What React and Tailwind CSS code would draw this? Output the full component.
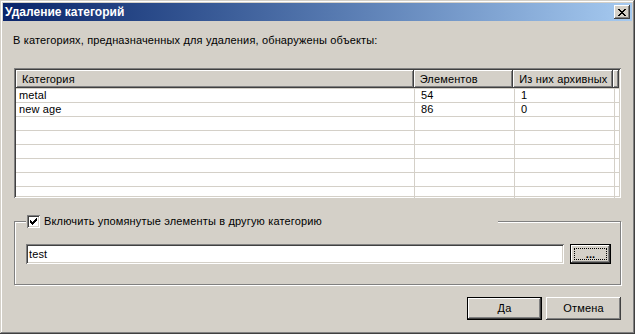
import React from 'react';

const raised = 'shadow-[inset_-1px_-1px_#404040,inset_1px_1px_#ffffff,inset_-2px_-2px_#808080,inset_2px_2px_#d4d0c8]';
const sunken = 'shadow-[inset_1px_1px_#808080,inset_-1px_-1px_#ffffff,inset_2px_2px_#404040,inset_-2px_-2px_#d4d0c8]';

const rows = [
  { name: 'metal', count: '54', archived: '1' },
  { name: 'new age', count: '86', archived: '0' },
  {}, {}, {}, {}, {}, {},
];

const CloseIcon = () => (
  <svg width="8" height="7" viewBox="0 0 8 7" shapeRendering="crispEdges">
    <path fill="#000" d="M0 0h2v1h-2zM6 0h2v1h-2zM1 1h2v1h-2zM5 1h2v1h-2zM2 2h4v1h-4zM3 3h2v1h-2zM2 4h4v1h-4zM1 5h2v1h-2zM5 5h2v1h-2zM0 6h2v1h-2zM6 6h2v1h-2z" />
  </svg>
);

const CheckMark = () => (
  <svg width="7" height="7" viewBox="0 0 7 7" shapeRendering="crispEdges">
    <path fill="#000" d="M6 0h1v3h-1zM5 1h1v3h-1zM4 2h1v3h-1zM3 3h1v3h-1zM2 4h1v3h-1zM1 3h1v3h-1zM0 2h1v3h-1z" />
  </svg>
);

const HeaderCell = ({ children, className }) => (
  <div className={`h-full flex items-center pl-[6px] ${raised} ${className}`}>{children}</div>
);

export default function App() {
  return (
    <div className="w-[635px] h-[334px] bg-[#d4d0c8] p-[3px] flex flex-col text-[11px] tracking-[0.15px] text-black font-['Liberation_Sans',sans-serif] shadow-[inset_-1px_-1px_#404040,inset_1px_1px_#d4d0c8,inset_-2px_-2px_#808080,inset_2px_2px_#ffffff]">
      {/* title bar */}
      <div className="h-[18px] shrink-0 flex items-center justify-between pl-[2px] pr-[2px] bg-gradient-to-r from-[#0a246a] to-[#a6caf0]">
        <span className="text-white font-bold text-[12px] tracking-normal leading-none">Удаление категорий</span>
        <button className={`w-[16px] h-[14px] bg-[#d4d0c8] flex items-center justify-center ${raised}`}>
          <CloseIcon />
        </button>
      </div>

      <div className="flex-1 flex flex-col px-[11px]">
        <div className="mt-[13px] h-[13px] leading-[13px] -ml-[1px]">
          В категориях, предназначенных для удаления, обнаружены объекты:
        </div>

        {/* list */}
        <div className={`mt-[21px] h-[130px] bg-white p-[2px] overflow-hidden ${sunken}`}>
          <div className="h-[18px] flex bg-[#d4d0c8]">
            <HeaderCell className="w-[399px]">Категория</HeaderCell>
            <HeaderCell className="w-[100px]">Элементов</HeaderCell>
            <HeaderCell className="w-[100px]">Из них архивных</HeaderCell>
            <HeaderCell className="flex-1 pl-0" />
          </div>
          {rows.map((r, i) => (
            <div key={i} className="h-[14px] flex border-t border-[#d4d0c8] leading-[13px]">
              <div className="w-[399px] pl-[3px] border-r border-[#d4d0c8]">{r.name}</div>
              <div className="w-[100px] pl-[6px] border-r border-[#d4d0c8]">{r.count}</div>
              <div className="w-[100px] pl-[6px] border-r border-[#d4d0c8]">{r.archived}</div>
            </div>
          ))}
        </div>

        {/* group box */}
        <div className="mt-[23px] h-[64px] border border-[#808080] shadow-[inset_1px_1px_#ffffff,1px_1px_#ffffff] flex flex-col pl-[11px] pr-[9px]">
          <div className="-mt-[7px] w-[472px] h-[13px] bg-[#d4d0c8] flex items-center">
            <div className={`ml-[1px] w-[13px] h-[13px] bg-white flex items-center justify-center ${sunken}`}>
              <CheckMark />
            </div>
            <span className="ml-[4px] leading-[13px]">Включить упомянутые элементы в другую категорию</span>
          </div>
          <div className="mt-[16px] flex items-center gap-[6px]">
            <div className={`w-[538px] h-[20px] bg-white flex items-center pl-[3px] ${sunken}`}>test</div>
            <button className="w-[41px] h-[20px] border border-black bg-[#d4d0c8] p-0">
              <div className={`w-full h-full p-[3px] ${raised}`}>
                <div className="w-full h-full border border-dotted border-black flex items-end justify-center leading-[10px] font-bold">...</div>
              </div>
            </button>
          </div>
        </div>

        {/* buttons */}
        <div className="mt-[12px] flex justify-end gap-[4px]">
          <button className="w-[75px] h-[23px] border border-black bg-[#d4d0c8] p-0">
            <div className={`w-full h-full flex items-center justify-center ${raised}`}>Да</div>
          </button>
          <button className={`w-[75px] h-[23px] bg-[#d4d0c8] flex items-center justify-center ${raised}`}>Отмена</button>
        </div>
      </div>
    </div>
  );
}
